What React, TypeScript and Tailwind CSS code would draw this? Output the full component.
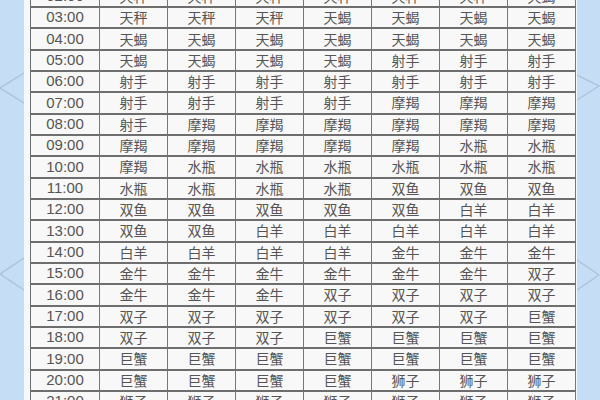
const hours = [
  '02:00', '03:00', '04:00', '05:00', '06:00', '07:00', '08:00', '09:00', '10:00', '11:00',
  '12:00', '13:00', '14:00', '15:00', '16:00', '17:00', '18:00', '19:00', '20:00', '21:00',
]

const signs: string[][] = [
  ['天秤', '天秤', '天秤', '天秤', '天秤', '天秤', '天蝎'],
  ['天秤', '天秤', '天秤', '天蝎', '天蝎', '天蝎', '天蝎'],
  ['天蝎', '天蝎', '天蝎', '天蝎', '天蝎', '天蝎', '天蝎'],
  ['天蝎', '天蝎', '天蝎', '天蝎', '射手', '射手', '射手'],
  ['射手', '射手', '射手', '射手', '射手', '射手', '射手'],
  ['射手', '射手', '射手', '射手', '摩羯', '摩羯', '摩羯'],
  ['射手', '摩羯', '摩羯', '摩羯', '摩羯', '摩羯', '摩羯'],
  ['摩羯', '摩羯', '摩羯', '摩羯', '摩羯', '水瓶', '水瓶'],
  ['摩羯', '水瓶', '水瓶', '水瓶', '水瓶', '水瓶', '水瓶'],
  ['水瓶', '水瓶', '水瓶', '水瓶', '双鱼', '双鱼', '双鱼'],
  ['双鱼', '双鱼', '双鱼', '双鱼', '双鱼', '白羊', '白羊'],
  ['双鱼', '双鱼', '白羊', '白羊', '白羊', '白羊', '白羊'],
  ['白羊', '白羊', '白羊', '白羊', '金牛', '金牛', '金牛'],
  ['金牛', '金牛', '金牛', '金牛', '金牛', '金牛', '双子'],
  ['金牛', '金牛', '金牛', '双子', '双子', '双子', '双子'],
  ['双子', '双子', '双子', '双子', '双子', '双子', '巨蟹'],
  ['双子', '双子', '双子', '巨蟹', '巨蟹', '巨蟹', '巨蟹'],
  ['巨蟹', '巨蟹', '巨蟹', '巨蟹', '巨蟹', '巨蟹', '巨蟹'],
  ['巨蟹', '巨蟹', '巨蟹', '巨蟹', '狮子', '狮子', '狮子'],
  ['狮子', '狮子', '狮子', '狮子', '狮子', '狮子', '狮子'],
]

function Chevrons({ side }: { side: 'left' | 'right' }) {
  const pts =
    side === 'left'
      ? ['24,73 0,88 24,103', '24,258 0,274 24,290']
      : ['0,75 23,86 0,100', '0,260 23,275 0,290']
  return (
    <svg className="h-full w-full" viewBox="0 0 24 400" preserveAspectRatio="none">
      {pts.map((p) => (
        <polyline key={p} points={p} fill="none" stroke="#a9c0d9" strokeWidth="1.2" />
      ))}
    </svg>
  )
}

export default function App() {
  return (
    <div className="flex h-[400px] w-[600px] overflow-hidden bg-[#c6ddf6]">
      <div className="h-full w-[24px] shrink-0">
        <Chevrons side="left" />
      </div>

      <div className="h-full shrink-0 bg-[#f6f9fc] pl-[6px] pr-[1px]">
        <div className="mt-[-13.33px] border-l border-[#6e6e6e] bg-[#f8f8f8]">
          {hours.map((hour, r) => (
            <div key={hour} className="flex h-[21.33px] border-b-2 border-[#6e6e6e]">
              <div className="flex w-[69px] items-center justify-center border-r border-[#777] font-['Liberation_Sans',sans-serif] text-[15px] text-[#555]">
                {hour}
              </div>
              {signs[r].map((sign, c) => (
                <div
                  key={`${hour}-${c}`}
                  className="flex w-[68px] items-center justify-center border-r border-[#777] font-['Noto_Sans_CJK_SC',sans-serif] text-[14px] text-[#555]"
                >
                  {sign}
                </div>
              ))}
            </div>
          ))}
        </div>
      </div>

      <div className="h-full flex-1">
        <Chevrons side="right" />
      </div>
    </div>
  )
}
